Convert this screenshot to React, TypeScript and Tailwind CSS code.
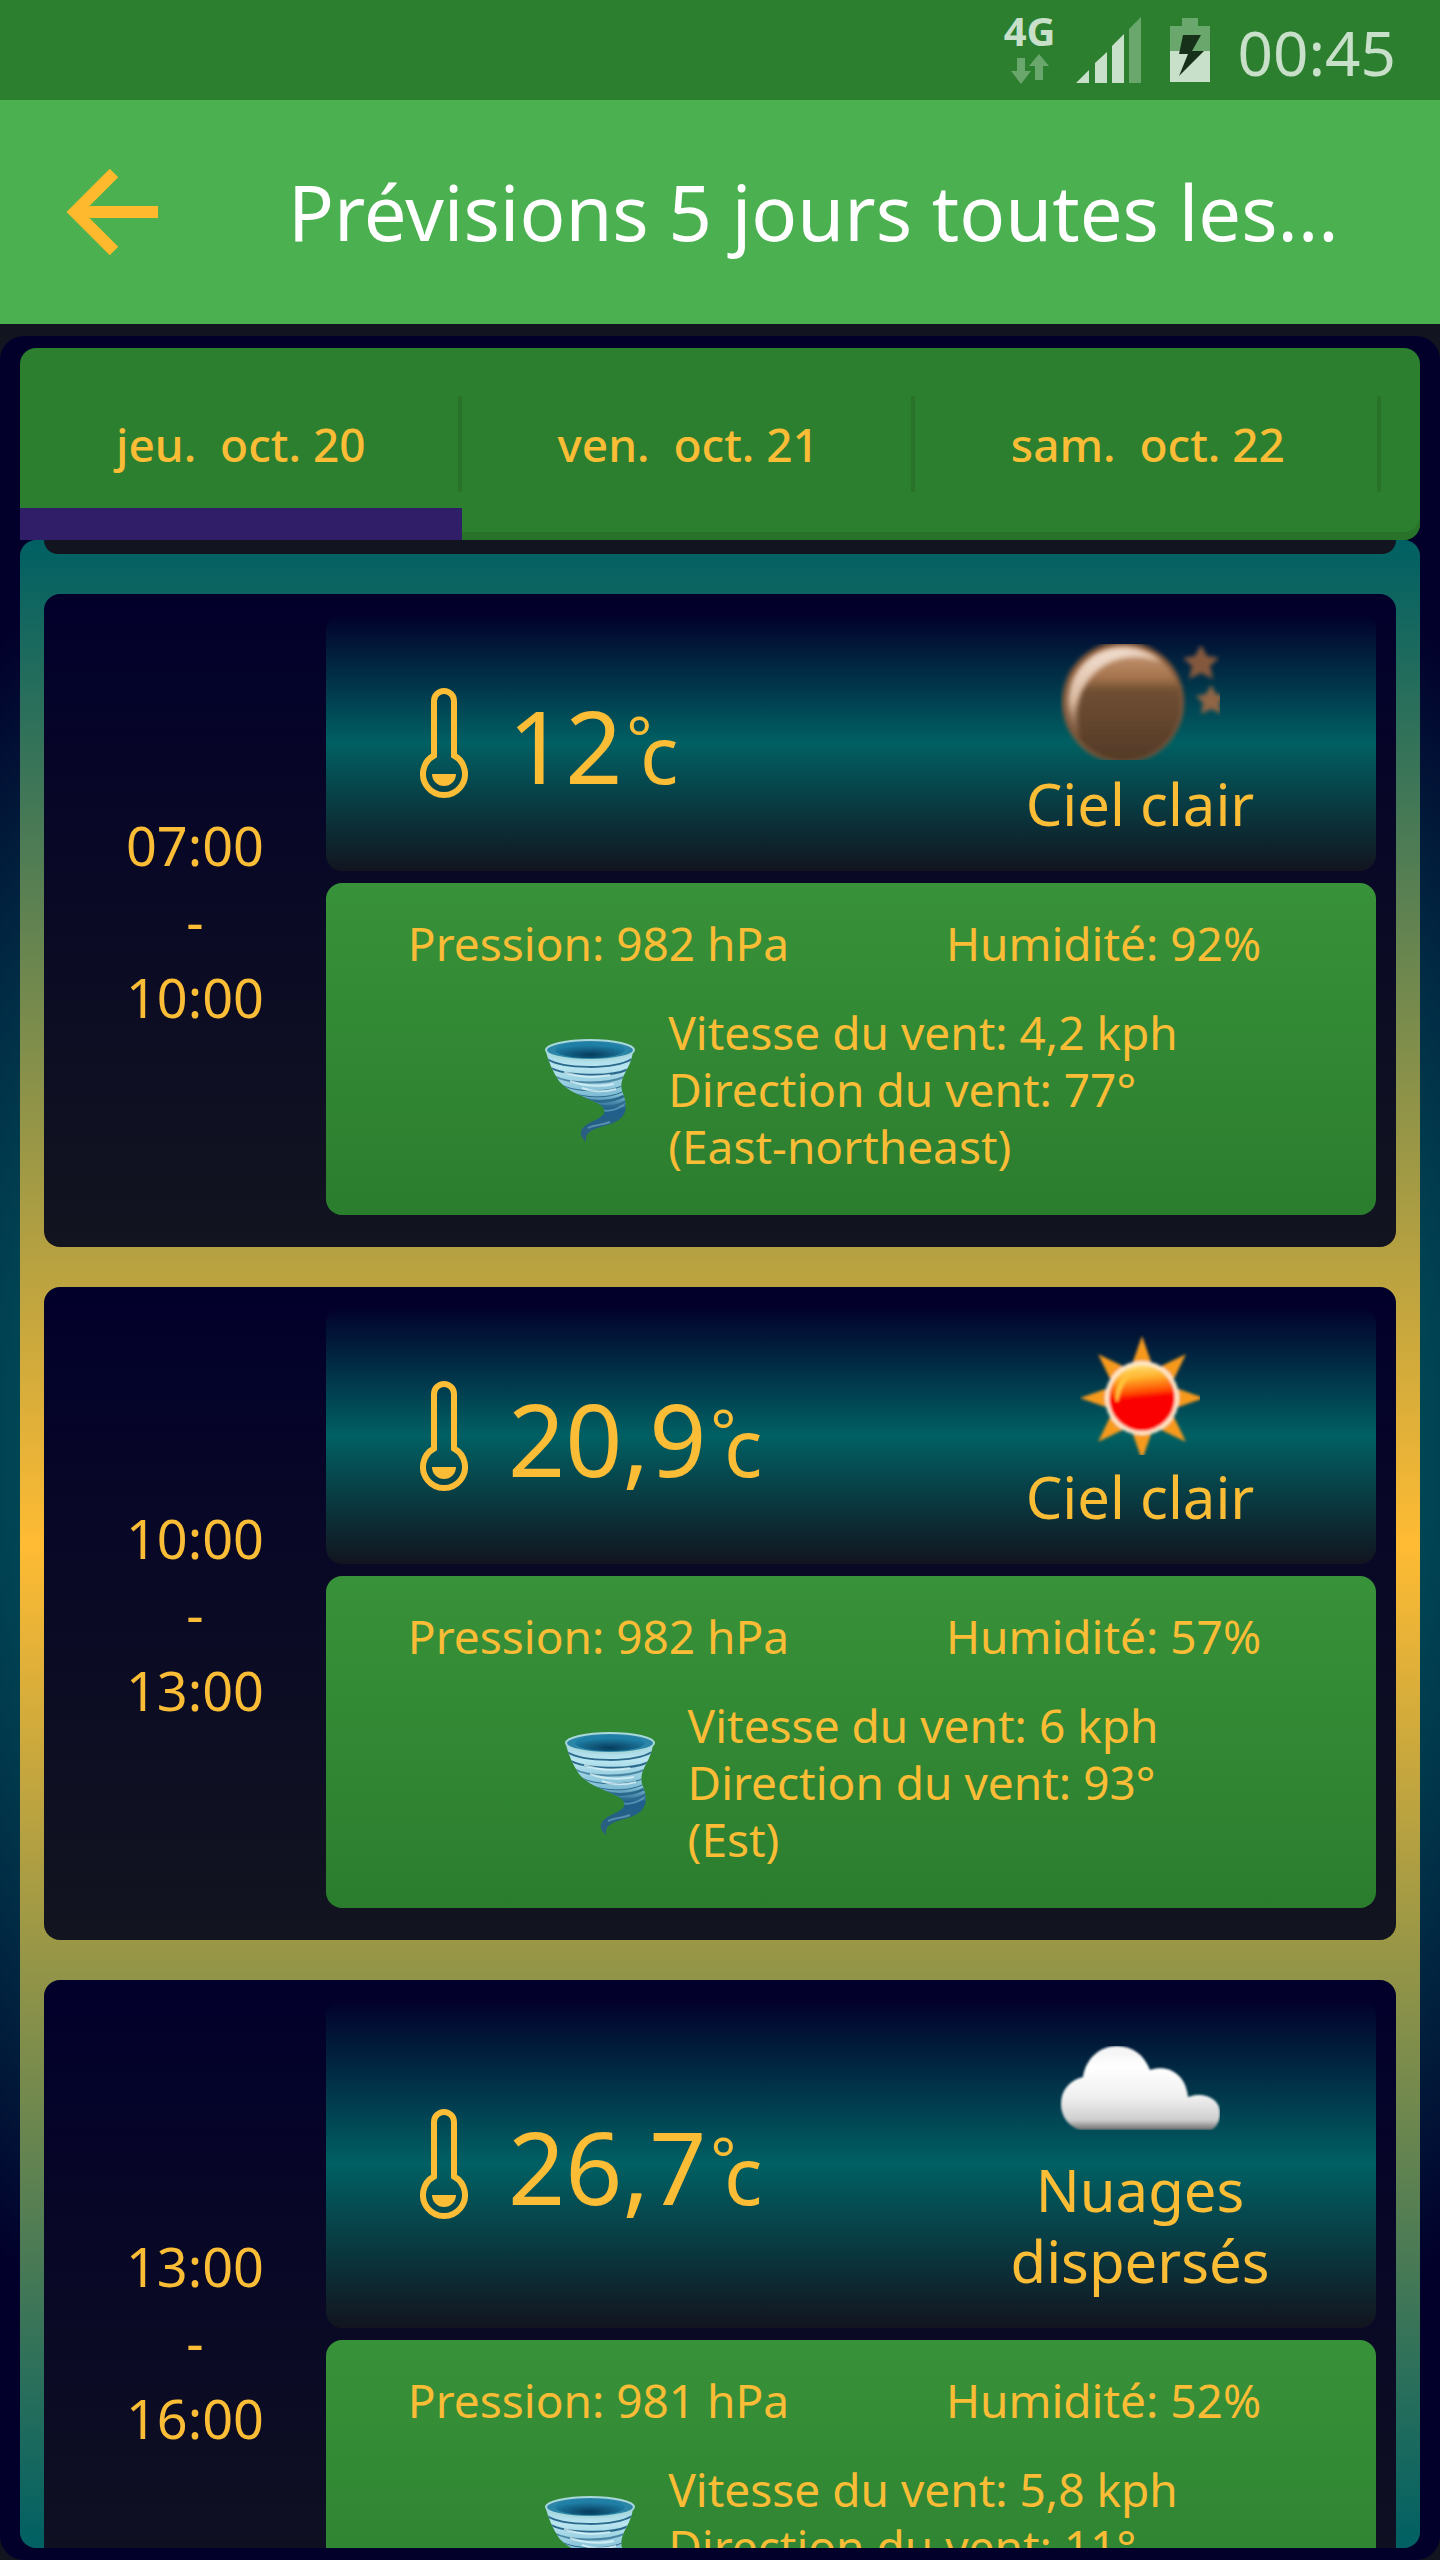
import { useState } from "react";

interface Forecast {
  from: string;
  to: string;
  temp: string;
  sky: "night" | "sun" | "cloud";
  description: string;
  pressure: number;
  humidity: number;
  wind: string;
  degrees: number;
  direction: string;
}

const DAYS = ["jeu.  oct. 20", "ven.  oct. 21", "sam.  oct. 22"];

const FORECASTS: Forecast[] = [
  {
    from: "07:00",
    to: "10:00",
    temp: "12",
    sky: "night",
    description: "Ciel clair",
    pressure: 982,
    humidity: 92,
    wind: "4,2 kph",
    degrees: 77,
    direction: "East-northeast",
  },
  {
    from: "10:00",
    to: "13:00",
    temp: "20,9",
    sky: "sun",
    description: "Ciel clair",
    pressure: 982,
    humidity: 57,
    wind: "6 kph",
    degrees: 93,
    direction: "Est",
  },
  {
    from: "13:00",
    to: "16:00",
    temp: "26,7",
    sky: "cloud",
    description: "Nuages dispersés",
    pressure: 981,
    humidity: 52,
    wind: "5,8 kph",
    degrees: 11,
    direction: "Nord",
  },
];

const MoonIcon = () => (
  <svg width="160" height="116" viewBox="0 0 160 116" aria-hidden="true">
    <defs>
      <linearGradient id="moon-body" x1="0" y1="0" x2="0" y2="1">
        <stop offset="0" stopColor="#c89a78" />
        <stop offset="0.27" stopColor="#a5744d" />
        <stop offset="0.38" stopColor="#704f33" />
        <stop offset="1" stopColor="#543a27" />
      </linearGradient>
      <linearGradient id="moon-shine" x1="0.2" y1="0" x2="0.5" y2="1">
        <stop offset="0" stopColor="#f6e6da" />
        <stop offset="0.5" stopColor="#d9b79d" />
        <stop offset="1" stopColor="#8a5c3d" stopOpacity="0" />
      </linearGradient>
      <filter id="moon-soft" x="-20%" y="-20%" width="140%" height="140%">
        <feGaussianBlur stdDeviation="2.5" />
      </filter>
      <filter id="edge-soft" x="-10%" y="-10%" width="120%" height="120%">
        <feGaussianBlur stdDeviation="2" />
      </filter>
    </defs>
    <g filter="url(#edge-soft)">
      <circle cx="63" cy="58" r="61" fill="#845a3b" />
      <circle cx="64" cy="60" r="57" fill="url(#moon-body)" />
      <path d="M141 1l6 11 12 2-9 8 3 13-12-6-12 6 3-13-9-8 12-2z" fill="#84593c" />
      <path d="M151 41l5 9 10 2-7 7 3 11-11-5-10 5 2-11-7-7 10-2z" fill="#8f6544" />
    </g>
    <path
      d="M17 94C1 66 5 30 35 11 57-1 83 2 101 18 79 10 57 12 41 24 17 42 13 68 21 94z"
      fill="url(#moon-shine)"
      filter="url(#moon-soft)"
    />
  </svg>
);

const SunIcon = () => (
  <svg width="120" height="120" viewBox="0 0 120 120" aria-hidden="true">
    <defs>
      <linearGradient id="sun-body" x1="0.4" y1="0" x2="0.5" y2="1">
        <stop offset="0" stopColor="#ffe27a" />
        <stop offset="0.2" stopColor="#ffb02a" />
        <stop offset="0.42" stopColor="#ff4a00" />
        <stop offset="0.5" stopColor="#fb0500" />
        <stop offset="1" stopColor="#fb0000" />
      </linearGradient>
      <filter id="sun-soft" x="-10%" y="-10%" width="120%" height="120%">
        <feGaussianBlur stdDeviation="1.5" />
      </filter>
    </defs>
    <g filter="url(#sun-soft)">
      {[0, 45, 90, 135, 180, 225, 270, 315].map((angle) => (
        <path key={angle} d="M62 1L75 38H49z" fill="#f79a1c" transform={`rotate(${angle} 62 63)`} />
      ))}
      <circle cx="62" cy="63" r="37" fill="#ffe9cc" />
      <circle cx="62" cy="63" r="33" fill="url(#sun-body)" />
      <path d="M36 66C34 48 46 34 64 35 50 38 42 48 38 66z" fill="#ffc23a" />
    </g>
  </svg>
);

const CloudIcon = () => (
  <svg width="160" height="84" viewBox="0 0 160 84" aria-hidden="true">
    <defs>
      <linearGradient id="cloud-body" x1="0" y1="0" x2="0" y2="1">
        <stop offset="0" stopColor="#f2f2f2" />
        <stop offset="0.25" stopColor="#ffffff" />
        <stop offset="0.6" stopColor="#f0f0f0" />
        <stop offset="0.88" stopColor="#cfcfcf" />
        <stop offset="1" stopColor="#6e6e6e" />
      </linearGradient>
      <filter id="cloud-soft" x="-10%" y="-10%" width="120%" height="120%">
        <feGaussianBlur stdDeviation="1.2" />
      </filter>
    </defs>
    <path
      d="M20 84C8 80 1 70 1 58 1 44 10 34 23 31 26 12 40 0 57 0c16 0 27 9 33 24 18-6 36 4 38 27 16-6 32 2 32 15 0 9-3 15-9 18z"
      fill="url(#cloud-body)"
      filter="url(#cloud-soft)"
    />
  </svg>
);

const SKY_ICONS = { night: MoonIcon, sun: SunIcon, cloud: CloudIcon };

const ThermometerIcon = () => (
  <svg width="48" height="110" viewBox="0 0 48 110" className="shrink-0" aria-hidden="true">
    <path
      d="M14 67.5V13a10 10 0 0 1 20 0V67.5a21 21 0 1 1-20 0z"
      fill="none"
      stroke="#fbbc36"
      strokeWidth="6"
    />
    <path d="M12 86h24a12 12 0 0 1-24 0z" fill="#fbbc36" />
  </svg>
);

const TornadoIcon = () => (
  <svg width="92" height="104" viewBox="0 0 92 104" className="shrink-0" aria-hidden="true">
    <defs>
      <linearGradient id="tornado-body" x1="0" y1="0" x2="0" y2="1">
        <stop offset="0" stopColor="#8cc4d6" />
        <stop offset="0.28" stopColor="#b9e6f0" />
        <stop offset="0.55" stopColor="#7fbcd4" />
        <stop offset="0.68" stopColor="#1f5f8c" />
        <stop offset="1" stopColor="#2d5f7c" />
      </linearGradient>
      <radialGradient id="tornado-mouth" cx="0.5" cy="0.8" r="0.6">
        <stop offset="0" stopColor="#063c5c" />
        <stop offset="1" stopColor="#1f7fa6" />
      </radialGradient>
      <clipPath id="tornado-shape">
        <path d="M2 14C5 25 9 34 15 43c9 11 24 15 38 22 7 3 9 8 6 12-6 6-19 8-22 16-1 5 2 8 5 11 0-5 0-8 5-11 8-5 20-5 29-12 9-8 6-18 2-28-2-8 1-14 4-20 4-7 6-13 7-19z" />
      </clipPath>
    </defs>
    <g clipPath="url(#tornado-shape)">
      <rect width="92" height="104" fill="url(#tornado-body)" />
      <g fill="none" stroke="#2b6a8c">
        <path d="M3 21c16 10 66 11 85 0" strokeWidth="2" />
        <path d="M5 29c16 9 60 11 80 2" strokeWidth="2" />
        <path d="M10 38c14 8 52 9 70 1" strokeWidth="2" opacity="0.7" />
        <path d="M18 47c12 7 44 8 60 1" strokeWidth="1" />
        <path d="M26 54c14 6 38 7 52 0" strokeWidth="1" />
        <path d="M40 61c12 4 28 3 40-3" strokeWidth="3" />
        <path d="M54 67c10 3 20 1 28-4" strokeWidth="2" />
      </g>
      <g fill="none" stroke="#e4f8fb" strokeWidth="2" opacity="0.7">
        <path d="M20 34c14 5 30 6 46 3M26 43c14 5 30 6 44 3M38 50c10 4 22 4 34 1" />
        <path d="M56 72c8 2 16 0 24-5M44 90c6-3 14-3 22-6" stroke="#6da4c0" />
      </g>
    </g>
    <ellipse cx="46" cy="12" rx="44" ry="10" fill="#2b86a8" stroke="#a8d8dc" strokeWidth="2" />
    <ellipse cx="46" cy="12" rx="35" ry="8" fill="url(#tornado-mouth)" />
  </svg>
);

const StatusBar = () => (
  <div className="flex h-[100px] shrink-0 items-center justify-end bg-[#2b7f2f] pr-11 text-[#c8e0c9]">
    <div className="mr-5 flex flex-col items-center gap-2">
      <span className="text-[40px] leading-[30px] font-bold">4G</span>
      <svg width="38" height="30" viewBox="0 0 38 30" fill="#6aa76d" aria-hidden="true">
        <path d="M6 4h8v13h6L10 30 0 17h6z" />
        <path d="M24 26h8V12h6L28 0 18 12h6z" />
      </svg>
    </div>
    <svg width="66" height="66" viewBox="0 0 66 66" fill="#c8e0c9" aria-hidden="true">
      <path d="M0 66L13 53V66z" />
      <path d="M19 46L31 35V66H19z" />
      <path d="M36 29L48 17V66H36z" />
      <path d="M53 12L65 0V66H53z" fill="#6aa76d" />
    </svg>
    <svg width="40" height="64" viewBox="0 0 40 64" className="ml-7" aria-hidden="true">
      <path d="M12 0h16v8h12v25H0V8h12z" fill="#6aa76d" />
      <path d="M0 33h40v31H0z" fill="#c8e0c9" />
      <path d="M13 17h18L22 33h12L9 58l9-22H9z" fill="#16301a" />
    </svg>
    <time className="ml-7 pt-1 text-[62px] leading-none">00:45</time>
  </div>
);

const ForecastCard = ({ forecast }: { forecast: Forecast }) => {
  const SkyIcon = SKY_ICONS[forecast.sky];
  return (
    <article className="flex shrink-0 rounded-2xl bg-linear-to-b/srgb from-[#02002b] to-[#12141f] pt-5 pr-5 pb-8">
      <div className="flex w-[282px] shrink-0 flex-col items-center justify-center pt-3 pl-5 text-[54px] leading-[76px]">
        <time>{forecast.from}</time>
        <span>-</span>
        <time>{forecast.to}</time>
      </div>
      <div className="flex flex-1 flex-col gap-3">
        <div className="flex items-center rounded-2xl bg-linear-to-b/srgb from-[#02002b] via-[#006063] to-[#12141f]">
          <div className="flex flex-1 items-center pl-[94px]">
            <ThermometerIcon />
            <p className="flex items-baseline pt-3 pl-10 text-[100px] leading-[100px]">
              {forecast.temp}
              <span className="-mr-3 ml-1 self-start text-[60px] leading-[84px]">°</span>
              <span className="text-[80px]">c</span>
            </p>
          </div>
          <div className="flex w-[472px] flex-col items-center px-24 pt-7 pb-8 text-center">
            <div className="flex h-[120px] items-center">
              <SkyIcon />
            </div>
            <p className="pt-1.5 text-[58px] leading-[71px]">{forecast.description}</p>
          </div>
        </div>
        <div className="rounded-2xl bg-linear-to-b/srgb from-[#389239] to-[#2b7d2e] pt-8 pb-10 text-[46px] leading-[57px]">
          <div className="grid grid-cols-2 px-5 text-center">
            <p>Pression: {forecast.pressure} hPa</p>
            <p>Humidité: {forecast.humidity}%</p>
          </div>
          <div className="mt-8 flex items-center justify-center gap-8 pl-5">
            <TornadoIcon />
            <div className="whitespace-nowrap">
              <p>Vitesse du vent: {forecast.wind}</p>
              <p>Direction du vent: {forecast.degrees}°</p>
              <p>({forecast.direction})</p>
            </div>
          </div>
        </div>
      </div>
    </article>
  );
};

const App = () => {
  const [selected, setSelected] = useState(0);

  return (
    <div className="flex h-screen flex-col overflow-hidden bg-[#12141f] font-['Noto_Sans',sans-serif] text-[#fbbc36]">
      <StatusBar />
      <header className="flex h-[224px] shrink-0 items-center bg-[#4bb04f] pl-16">
        <button type="button" aria-label="Retour" className="shrink-0">
          <svg width="96" height="88" viewBox="0 0 96 88" fill="none" stroke="#ffb92e" strokeWidth="12" aria-hidden="true">
            <path d="M50 5L11 44l39 39M11 44h83" />
          </svg>
        </button>
        <h1 className="ml-32 truncate text-[76px] leading-[112px] text-white">
          Prévisions 5 jours toutes les...
        </h1>
      </header>
      <main className="mt-3 flex min-h-0 flex-1 flex-col rounded-3xl bg-[radial-gradient(circle,#006063_560px,#02002b_1080px)] px-5 pt-3 pb-3">
        <div
          role="tablist"
          className="flex h-48 shrink-0 items-stretch overflow-hidden rounded-2xl rounded-bl-none bg-[#2b7f2f] shadow-[inset_0_-8px_#287229]"
        >
          {DAYS.map((day, index) => (
            <button
              key={day}
              type="button"
              role="tab"
              aria-selected={index === selected}
              onClick={() => setSelected(index)}
              className="relative flex items-center px-24 text-[46px] leading-none font-medium whitespace-pre"
            >
              {day}
              <span className="absolute top-12 right-0 h-24 w-1 bg-[#287229]" />
              {index === selected && <span className="absolute inset-x-0 bottom-0 h-8 bg-[#301e69]" />}
            </button>
          ))}
        </div>
        <div className="flex min-h-0 flex-1 flex-col gap-10 overflow-hidden rounded-2xl bg-linear-to-b/srgb from-[#006063] via-[#ffbb33] to-[#006063] px-6">
          <div className="h-[14px] shrink-0 rounded-b-2xl bg-[#12141f]" />
          {FORECASTS.map((forecast) => (
            <ForecastCard key={forecast.from} forecast={forecast} />
          ))}
        </div>
      </main>
    </div>
  );
};

export default App;
